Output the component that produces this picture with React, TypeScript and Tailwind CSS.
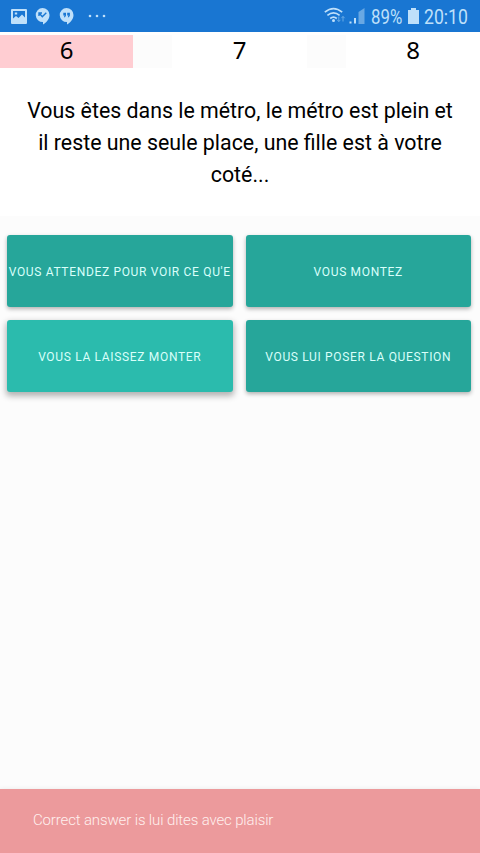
import React from 'react';

const scores = [
  { value: 6, active: true },
  { value: 7, active: false },
  { value: 8, active: false },
];

const answers = [
  { label: "VOUS ATTENDEZ POUR VOIR CE QU'E", pressed: false },
  { label: 'VOUS MONTEZ', pressed: false },
  { label: 'VOUS LA LAISSEZ MONTER', pressed: true },
  { label: 'VOUS LUI POSER LA QUESTION', pressed: false },
];

const StatusBar: React.FC = () => (
  <header className="h-8 bg-[#1976d2] flex items-center text-[#bfe0fa]">
    {/* Notifications */}
    <div className="flex items-center pl-[11px]">
      <svg width="16" height="15" viewBox="0 0 16 15" fill="currentColor">
        <path fillRule="evenodd" d="M1 0h14q1 0 1 1v13q0 1-1 1H1q-1 0-1-1V1q0-1 1-1ZM2 2v7.500l3-2.500 2.500 2 3.500-3.500 3 3V2ZM3.800 3.500h2.400v2H3.800Z" />
      </svg>
      <svg className="ml-2" width="15" height="17" viewBox="0 0 15 17">
        <path fill="currentColor" d="M7.500 0a7 7 0 0 1 7 7c0 4-3 7.500-6.500 9.500V14A7 7 0 1 1 7.500 0Z" />
        <path d="M4 8V5h3M4.300 5.300 7.300 8.700l4-4" fill="none" stroke="#1976d2" strokeWidth="1.400" />
      </svg>
      <svg className="ml-[9px]" width="15" height="17" viewBox="0 0 15 17">
        <path fill="currentColor" d="M7.500 0a7 7 0 0 1 7 7c0 4-3 7.500-6.500 9.500V14A7 7 0 1 1 7.500 0Z" />
        <path fill="#1976d2" d="M4.300 4.800H7v2.700L6 9.200H4.900l.7-1.700H4.300ZM8.200 4.800h2.700v2.700l-1 1.700H8.800l.7-1.700H8.200Z" />
      </svg>
      <svg className="ml-[14px]" width="18" height="4" viewBox="0 0 18 4" fill="currentColor">
        <circle cx="2" cy="2" r="1.300" />
        <circle cx="9" cy="2" r="1.300" />
        <circle cx="16" cy="2" r="1.300" />
      </svg>
    </div>

    {/* Connection, battery and clock */}
    <div className="ml-auto flex items-center">
      <svg width="41" height="18" viewBox="0 0 41 18">
        <g fill="none" stroke="currentColor" strokeWidth="1.700">
          <path d="M.8 5.200q8.700-7.200 17.400 0M3.400 8.400q6.100-5 12.200 0M6.200 11.500q3.300-2.800 6.600 0" />
        </g>
        <circle cx="9.500" cy="13.500" r="1.500" fill="currentColor" />
        <path d="M14.800 9.500v5m-1.600-1.700 1.600 1.800 1.600-1.800M19 14.500v-5m-1.600 1.700L19 9.400l1.600 1.800" fill="none" stroke="#69abe5" />
        <path d="M25.500 16.500v-2h2v2ZM30 16.500V11h2v5.500Z" fill="currentColor" />
        <path d="M34.500 17V5l6-4v16Z" fill="#69a8e3" />
      </svg>
      <span className="ml-[6px] w-8 whitespace-nowrap text-xl leading-none pt-px">
        <span className="inline-block origin-left scale-x-[0.84]">89%</span>
      </span>
      <svg className="ml-[5px]" width="11" height="16" viewBox="0 0 11 16" fill="currentColor">
        <path d="M3 0h5v2h3v14H0V2h3Z" />
      </svg>
      <span className="ml-[5px] w-14 whitespace-nowrap text-xl leading-none pt-px">
        <span className="inline-block origin-left scale-x-[0.88]">20:10</span>
      </span>
    </div>
  </header>
);

const App: React.FC = () => {
  return (
    <div className="h-[853px] w-full bg-[#fcfcfc] flex flex-col overflow-hidden font-[Roboto,sans-serif]">
      <StatusBar />

      {/* Scores and question */}
      <section className="h-[184px] bg-white pt-[3px]">
        <div className="h-[33px] grid grid-cols-[133px_135px_134px] justify-between bg-[#fcfcfc] font-['Noto_Sans',sans-serif]">
          {scores.map((score) => (
            <div
              key={score.value}
              className={`flex items-center justify-center pb-1 text-2xl leading-none text-black ${score.active ? 'bg-[#ffcdd2]' : 'bg-white'}`}
            >
              {score.value}
            </div>
          ))}
        </div>
        <p className="mt-[27px] px-5 text-center text-[21.35px] leading-8 text-black">
          Vous êtes dans le métro, le métro est plein et
          <br />
          il reste une seule place, une fille est à votre
          <br />
          coté...
        </p>
      </section>

      {/* Answers */}
      <section className="mt-[19px] grid grid-cols-2 gap-[13px] pl-[7px] pr-[9px]">
        {answers.map((answer) => (
          <button
            key={answer.label}
            className={`h-[72px] pt-0.5 rounded-[3px] whitespace-nowrap overflow-hidden text-xs tracking-[0.67px] text-[#d9fffa] ${answer.pressed ? 'bg-[#2bbbad] shadow-[0_3px_6px_1px_rgba(0,0,0,0.3)]' : 'bg-[#26a69a] shadow-[0_2px_4px_rgba(0,0,0,0.3)]'}`}
          >
            {answer.label}
          </button>
        ))}
      </section>

      {/* Toast */}
      <footer className="mt-auto h-16 bg-[#ec9a9c] flex items-center pb-px pl-[33px] text-[15px] tracking-[-0.14px] font-light text-[#fff0ee] shadow-[0_0_5px_rgba(0,0,0,0.08)]">
        Correct answer is lui dites avec plaisir
      </footer>
    </div>
  );
};

export default App;
